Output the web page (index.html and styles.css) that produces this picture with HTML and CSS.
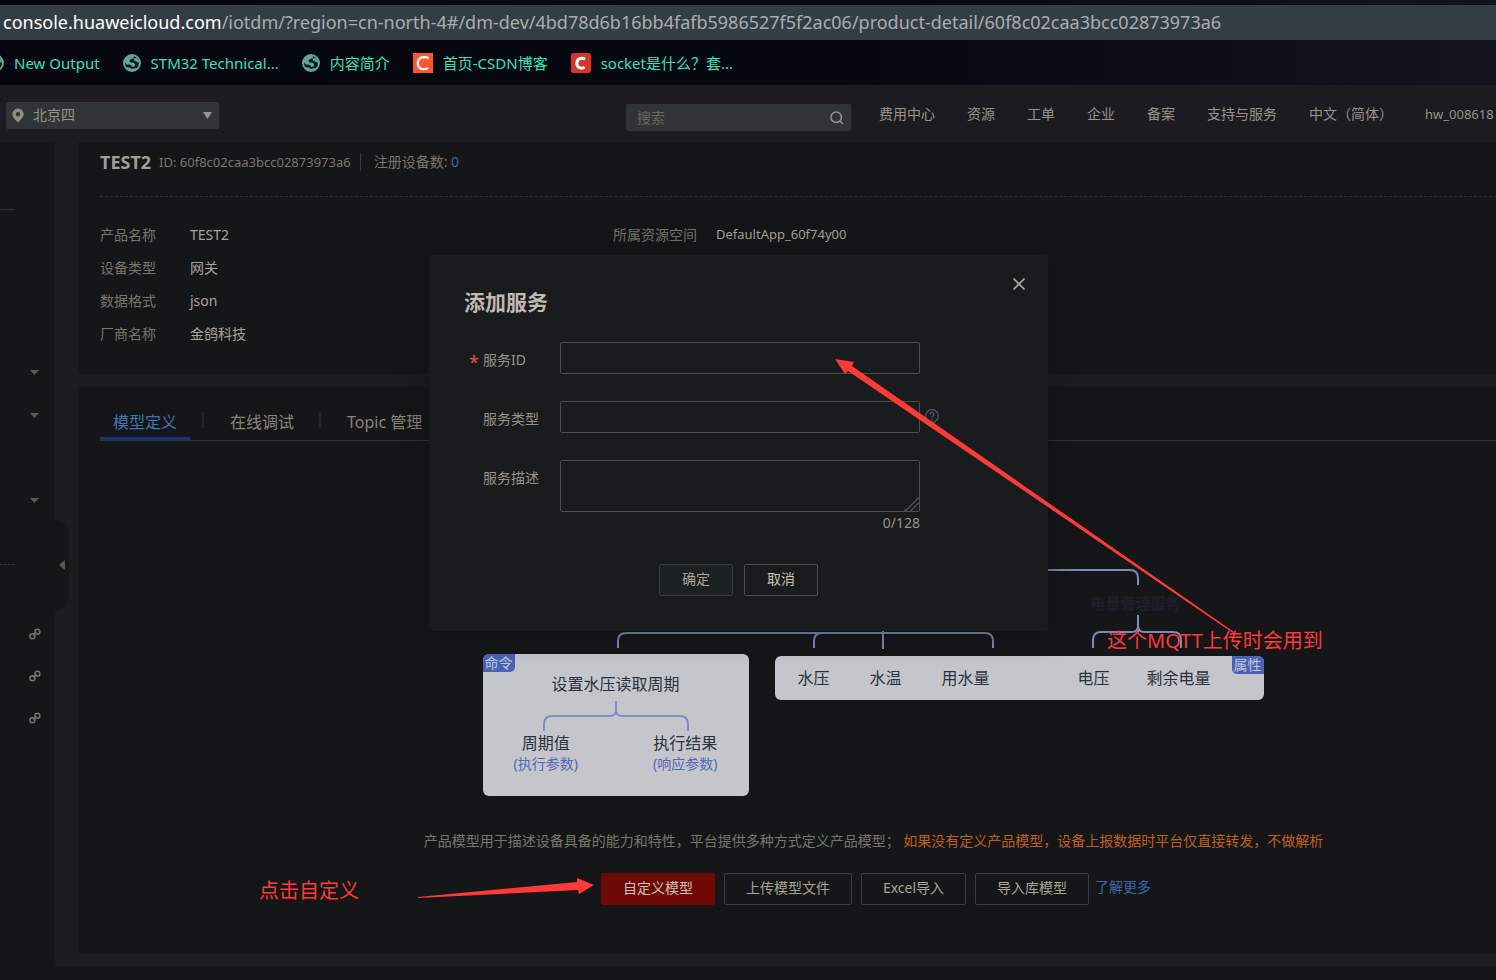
FILE: index.html
```html
<!DOCTYPE html>
<html lang="zh-CN">
<head>
<meta charset="utf-8">
<title>TEST2 - 产品详情</title>
<link rel="stylesheet" href="styles.css">
</head>
<body>
<svg class="sprite" aria-hidden="true">
  <symbol id="globe" viewBox="0 0 18 18">
    <circle cx="9" cy="9" r="8" fill="#0a1416" stroke="#5fa796" stroke-width="2"/>
    <path d="M1.500 8C2 4 5 1.200 9.500 1.200L11 2.500 10.500 4.500 8 5 6.500 6.800 7.500 8.500 10.500 8.500 12.300 10.500 11.500 12.500 9 13 8.500 11.500 6.500 10.500 4 10.800Z" fill="#5fa796"/>
    <path d="M10.500 4.500L13.500 4 16.800 8 15.500 8.800 13 7.500 11 6.500ZM3 13L6.500 13.500 9 15 12.500 14 14.500 14.200C12 17.500 5.500 18 3 13Z" fill="#5fa796"/>
  </symbol>
  <symbol id="chain" viewBox="0 0 12 12">
    <g fill="none" stroke="#77726a" stroke-width="1.500">
      <circle cx="3.400" cy="8.300" r="2.500"/>
      <circle cx="8.400" cy="3.700" r="2.500"/>
      <path d="M4.200 7.500L7.600 4.500"/>
    </g>
  </symbol>
</svg>

<div class="page">
  <div class="browser">
    <div class="address"><b>console.huaweicloud.com</b>/iotdm/?region=cn-north-4#/dm-dev/4bd78d6b16bb4fafb5986527f5f2ac06/product-detail/60f8c02caa3bcc02873973a6</div>
    <nav class="bookmarks" aria-label="书签">
      <a href="#"><svg class="globe"><use href="#globe"/></svg>New Output</a>
      <a href="#"><svg class="globe"><use href="#globe"/></svg>STM32 Technical...</a>
      <a href="#"><svg class="globe"><use href="#globe"/></svg>内容简介</a>
      <a href="#"><svg class="csdn" viewBox="0 0 20 20"><path fill="#fc5531" d="M0 0H20V20H0Z"/><path d="M15.500 5.200C12.500 3.300 4.800 3.300 4.800 10.300S12 17 15.200 14.800" fill="none" stroke="#fff" stroke-width="2.200"/></svg>首页-CSDN博客</a>
      <a href="#"><svg class="csdn" viewBox="0 0 20 20"><rect width="20" height="20" rx="2.500" fill="#d7342a"/><path d="M14 6.200C10.500 4.300 5.800 5.300 5.800 10.200S10.500 16 13.700 14.300" fill="none" stroke="#fff" stroke-width="3"/></svg>socket是什么？套...</a>
    </nav>
  </div>

  <header class="console">
    <div class="region">
      <svg class="pin" viewBox="0 0 12 15"><path fill="#928c83" fill-rule="evenodd" d="M6 .5A5.700 5.700 0 0 0 .3 6.200C.3 9.500 4 12 6 14.600 8 12 11.700 9.500 11.700 6.200A5.700 5.700 0 0 0 6 .5ZM6 4A2.200 2.200 0 1 1 6 8.400 2.200 2.200 0 0 1 6 4Z"/></svg>
      <select aria-label="区域"><option>北京四</option></select>
      <svg class="down" viewBox="0 0 9 7"><path fill="#98928a" d="M0 0H9L4.500 7Z"/></svg>
    </div>
    <div class="search">
      <input type="search" placeholder="搜索" aria-label="搜索">
      <svg viewBox="0 0 14 14"><circle cx="6.200" cy="6.200" r="5.200" fill="none" stroke="#98928a" stroke-width="1.500"/><path d="M10 10L13 13" stroke="#98928a" stroke-width="1.500"/></svg>
    </div>
    <nav class="menu" aria-label="导航">
      <a href="#">费用中心</a><a href="#">资源</a><a href="#">工单</a><a href="#">企业</a><a href="#">备案</a><a href="#">支持与服务</a><a href="#">中文（简体）</a><a class="latin" href="#">hw_008618</a>
    </nav>
  </header>

  <div class="body">
    <aside class="side">
      <hr class="rule">
      <button class="row" aria-label="展开"><svg class="caret" viewBox="0 0 9 5"><path d="M0 0H9L4.500 5Z"/></svg></button>
      <button class="row" aria-label="展开"><svg class="caret" viewBox="0 0 9 5"><path d="M0 0H9L4.500 5Z"/></svg></button>
      <div class="row short"></div>
      <button class="row" aria-label="展开"><svg class="caret" viewBox="0 0 9 5"><path d="M0 0H9L4.500 5Z"/></svg></button>
      <hr class="rule dashed">
      <a class="row short" href="#" aria-label="链接"><svg class="chain"><use href="#chain"/></svg></a>
      <a class="row short" href="#" aria-label="链接"><svg class="chain"><use href="#chain"/></svg></a>
      <a class="row short" href="#" aria-label="链接"><svg class="chain"><use href="#chain"/></svg></a>
      <button class="handle" aria-label="收起"><svg viewBox="0 0 6 10"><path fill="#5f584e" d="M6 0V10L0 5Z"/></svg></button>
    </aside>

    <main class="content">
      <section class="card summary">
        <div class="heading">
          <h1>TEST2</h1>
          <span class="pid latin">ID: 60f8c02caa3bcc02873973a6</span>
          <span class="count">注册设备数: <a href="#">0</a></span>
        </div>
        <dl class="facts">
          <dt>产品名称</dt><dd>TEST2</dd><dt>所属资源空间</dt><dd class="latin">DefaultApp_60f74y00</dd>
          <dt>设备类型</dt><dd>网关</dd>
          <dt>数据格式</dt><dd>json</dd>
          <dt>厂商名称</dt><dd>金鸽科技</dd>
        </dl>
      </section>

      <section class="card model">
        <nav class="tabs" aria-label="标签页">
          <a class="active" href="#">模型定义</a><a href="#">在线调试</a><a href="#">Topic 管理</a>
        </nav>

        <div class="diagram">
          <svg class="lines" viewBox="0 0 782 236" fill="none" stroke="#7d8bb8" stroke-width="2">
            <path d="M400 10H647Q655 10 655 18V25M655 55V72M610 88V80Q610 72 618 72H649Q655 72 655 66Q655 72 661 72H690Q698 72 698 80V88"/>
            <path d="M135 88V81Q135 73 143 73H502Q510 73 510 81V88M331 88V81Q331 73 339 73M400 71V89"/>
          </svg>
          <strong class="service">电量管理服务</strong>
          <div class="node command">
            <span class="tag">命令</span>
            <p>设置水压读取周期</p>
            <svg viewBox="0 0 148 32" fill="none" stroke="#7d8fc4" stroke-width="2"><path d="M2 31V24Q2 16 10 16H68Q74 16 74 10V1V10Q74 16 80 16H138Q146 16 146 24V31"/></svg>
            <div class="pair">
              <div>周期值<small>(执行参数)</small></div>
              <div>执行结果<small>(响应参数)</small></div>
            </div>
          </div>
          <div class="node props">
            <span>水压</span><span>水温</span><span>用水量</span><span class="apart">电压</span><span>剩余电量</span>
            <span class="tag">属性</span>
          </div>
        </div>

        <p class="hint">产品模型用于描述设备具备的能力和特性，平台提供多种方式定义产品模型； <em>如果没有定义产品模型，设备上报数据时平台仅直接转发，不做解析</em></p>
        <div class="actions">
          <button class="btn primary">自定义模型</button>
          <button class="btn">上传模型文件</button>
          <button class="btn">Excel导入</button>
          <button class="btn">导入库模型</button>
          <a href="#">了解更多</a>
        </div>
      </section>
    </main>
  </div>

  <div class="overlay">
    <form class="modal" role="dialog" aria-labelledby="dlg-title">
      <button class="close" type="button" aria-label="关闭"><svg viewBox="0 0 12 12"><path d="M.5.5L11.500 11.500M11.500.5L.5 11.500" stroke="#aaa69d" stroke-width="1.600"/></svg></button>
      <h2 id="dlg-title">添加服务</h2>
      <div class="field">
        <label for="sid"><i>*</i>服务ID</label>
        <input id="sid" type="text">
      </div>
      <div class="field">
        <label for="stype">服务类型</label>
        <input id="stype" type="text">
        <svg class="help" viewBox="0 0 14 14" fill="none" stroke="#515868" stroke-width="1.200"><circle cx="7" cy="7" r="6.300"/><path d="M5 5.500C5 2.700 9.200 2.900 9 5.400 8.900 6.700 7 6.800 7 8.600M7 9.800V11.200"/></svg>
      </div>
      <div class="field">
        <label for="sdesc">服务描述</label>
        <textarea id="sdesc"></textarea>
      </div>
      <div class="counter">0/128</div>
      <div class="buttons">
        <button class="btn ok" type="button">确定</button>
        <button class="btn cancel" type="button">取消</button>
      </div>
    </form>
  </div>

  <svg class="arrows" fill="#fc3a38" aria-hidden="true">
    <path d="M835 359L854 362 852 366 1234 632 1233 633 848 371 845 374Z"/>
    <path d="M418 897L577 882 577 878 594 885 579 894 578 890 418 898Z"/>
  </svg>
  <span class="note note-mqtt">这个MQTT上传时会用到</span>
  <span class="note note-custom">点击自定义</span>
</div>
</body>
</html>
```
FILE: styles.css
```css
* { box-sizing: border-box; }

body {
  margin: 0;
  background: #141617;
  color: #98928a;
  font: 14px/20px "Noto Sans", "Noto Sans CJK SC", sans-serif;
}

a { color: inherit; text-decoration: none; }
button, input, select, textarea { font: inherit; color: inherit; margin: 0; }
h1, h2, p, dl, dd, hr { margin: 0; }
svg { flex: none; display: block; }
.sprite { position: absolute; width: 0; height: 0; }
.latin { font-size: 13px; }

.page {
  position: relative;
  min-height: 100vh;
  overflow: hidden;
}

/* browser chrome */
.browser {
  padding-top: 5px;
  background: linear-gradient(90deg, #05060e, #070911 60%, #12151f);
}
.address {
  padding-left: 3px;
  background: #353d44;
  color: #a9adb0;
  font-size: 18px;
  line-height: 35px;
  white-space: nowrap;
}
.address b { color: #fff; font-weight: 400; }
.bookmarks {
  display: flex;
  align-items: center;
  gap: 23px;
  height: 45px;
  margin-left: -14px;
  color: #41e0b4;
  font-size: 15px;
  white-space: nowrap;
}
.bookmarks a { display: flex; align-items: center; gap: 10px; }
.globe { width: 18px; height: 18px; }
.csdn { width: 20px; height: 20px; }

/* console header */
.console {
  display: flex;
  align-items: center;
  height: 57px;
  padding-left: 6px;
  background: #1c1c20;
  white-space: nowrap;
}
.region, .search {
  display: flex;
  align-items: center;
  height: 27px;
  border-radius: 2px;
  background: #303436;
}
.region { flex: none; width: 213px; margin-top: 4px; padding: 0 7px 0 6px; }
.region select {
  flex: 1;
  border: 0;
  padding: 0 0 2px 9px;
  background: none;
  appearance: none;
}
.pin { width: 12px; height: 15px; }
.down { width: 9px; height: 7px; }
.search { flex: none; width: 225px; margin: 8px 28px 0 407px; padding: 0 7px 0 11px; }
.search input {
  flex: 1;
  min-width: 0;
  border: 0;
  padding: 0;
  background: none;
  appearance: none;
  outline: 0;
}
.search input::placeholder { color: #69665f; opacity: 1; }
.search svg { width: 14px; height: 14px; }
.menu { display: flex; gap: 32px; }

/* page body */
.body { display: flex; background: #1b1c1e; }
.side {
  position: relative;
  flex: none;
  width: 55px;
  background: #141617;
}
.rule {
  width: 15px;
  margin: 67px 0 141px;
  border: 0;
  border-top: 1px solid #303234;
}
.rule.dashed { margin: 42px 0 48px; border-top-style: dashed; }
.row {
  display: flex;
  align-items: center;
  width: 100%;
  height: 43px;
  padding: 0 0 0 30px;
  border: 0;
  background: none;
}
.row.short { height: 42px; padding-left: 29px; }
.caret { width: 9px; height: 5px; fill: #5f584e; }
.chain { width: 12px; height: 12px; }
.handle {
  position: absolute;
  top: 378px;
  left: 55px;
  width: 14px;
  height: 90px;
  padding: 0 0 0 4px;
  border: 0;
  border-radius: 0 14px 14px 0;
  background: #141617;
}
.handle svg { width: 6px; height: 10px; }

/* the content column is wider than the window and runs past its right edge */
.content {
  flex: 1;
  display: grid;
  gap: 13px;
  margin-right: -173px;
  padding: 0 0 14px 23px;
}
.card { background: #141617; padding: 0 22px; }

.summary { padding-bottom: 24px; }
.heading {
  display: flex;
  align-items: center;
  height: 55px;
  padding-bottom: 15px;
  border-bottom: 1px dashed #2e3133;
  color: #7a756e;
}
.heading h1 { color: #a39e95; font-size: 18px; }
.pid { margin: 0 9px 0 8px; }
.count { padding-left: 13px; border-left: 1px solid #3a3b3c; line-height: 18px; }
.count a { color: #3c68a8; }
.facts {
  display: grid;
  grid-template-columns: 90px 423px 103px 1fr;
  grid-auto-rows: 33px;
  padding: 21px 0 0;
  line-height: 33px;
}
.facts dt { color: #7a756e; }
.facts dt:nth-of-type(n+3) { grid-column: 1; }
.facts dt:nth-of-type(2) { grid-column: 3; }
.facts dd { color: #a9a49b; }

.model { padding-bottom: 48px; }
.tabs {
  display: flex;
  gap: 27px;
  padding-top: 20px;
  border-bottom: 1px solid #323436;
  color: #8a847b;
  font-size: 16px;
  line-height: 30px;
}
.tabs a {
  position: relative;
  padding: 0 13px;
  border-bottom: 3px solid transparent;
}
.tabs a + a::before {
  content: "";
  position: absolute;
  left: -15px;
  top: 5px;
  height: 16px;
  border-left: 2px solid #242627;
}
.tabs .active { color: #4274b8; border-color: #1c2f7a; }

.diagram {
  position: relative;
  width: 782px;
  height: 236px;
  margin: 119px auto 0;
  color: #2a3040;
  font-size: 16px;
  white-space: nowrap;
}
.lines { width: 100%; height: 100%; }
.service { position: absolute; left: 608px; top: 33px; color: #1b202c; font-size: 15px; }
.node { position: absolute; border-radius: 6px; background: #c5c6cb; overflow: hidden; }
.command {
  left: 0;
  top: 94px;
  width: 266px;
  height: 142px;
  padding: 20px 0;
  text-align: center;
}
.command svg { width: 148px; height: 32px; margin: 6px auto 1px 59px; }
.pair { display: flex; justify-content: space-between; padding: 0 31px; }
.pair small { display: block; color: #5468b4; font-size: 14px; line-height: 22px; }
.props {
  left: 292px;
  top: 96px;
  display: flex;
  align-items: center;
  gap: 40px;
  width: 489px;
  height: 44px;
  padding-left: 23px;
}
.apart { margin: 0 -3px 0 48px; }
.tag {
  position: absolute;
  top: 0;
  padding: 0 2px;
  background: #4a62b4;
  color: #c3c8da;
  font-size: 14px;
  line-height: 18px;
}
.command .tag { left: 0; border-radius: 0 0 5px 0; }
.props .tag { right: 0; border-radius: 0 0 0 5px; }

.hint {
  margin-top: 35px;
  color: #7a756e;
  text-align: center;
}
.hint em { color: #c0601f; font-style: normal; }
.actions {
  display: flex;
  justify-content: center;
  gap: 9px;
  margin-top: 22px;
  padding-left: 5px;
}
.btn {
  height: 32px;
  padding: 0 21px 2px;
  border: 1px solid #3b3d3f;
  border-radius: 2px;
  background: none;
  color: #a9a49b;
}
.btn.primary { border-color: #6e0906; background: #6e0906; color: #c9c3bb; }
.actions a { margin: 4px 0 0 -3px; color: #3c68a8; }

/* dialog */
.overlay {
  position: absolute;
  inset: 0;
  display: flex;
  justify-content: center;
  align-items: flex-start;
  padding: 255px 19px 0 0;
}
.modal {
  position: relative;
  width: 619px;
  padding: 35px 35px 35px 40px;
  border-radius: 2px;
  background: #1a1b1d;
  box-shadow: 0 0 30px #0e101180;
}
.modal h2 { margin: 0 0 27px -5px; color: #bfbab0; font-size: 21px; line-height: 25px; }
.close { position: absolute; top: 23px; right: 23px; padding: 0; border: 0; background: none; }
.close svg { width: 12px; height: 12px; }
.field {
  display: grid;
  grid-template-columns: 91px 360px 24px;
  align-items: start;
  margin-bottom: 27px;
}
.field label { padding: 8px 0 0 14px; color: #98938a; }
.field i { float: left; margin-left: -14px; color: #e0504c; font-size: 18px; font-style: normal; line-height: 24px; }
.field input, .field textarea {
  width: 100%;
  height: 32px;
  padding: 0 8px;
  border: 1px solid #4b4d4e;
  border-radius: 2px;
  background: none;
  outline: 0;
}
.field textarea { display: block; height: 52px; }
.field textarea::-webkit-resizer {
  background: linear-gradient(135deg, transparent 50%, #4b4d4e 50% 57%, transparent 57% 68%, #4b4d4e 68% 75%, transparent 75%);
}
.field:nth-of-type(3) { margin-bottom: 1px; }
.help { width: 14px; height: 14px; margin: 8px 0 0 5px; }
.counter { width: 451px; text-align: right; }
.buttons { display: flex; gap: 11px; margin: 31px 0 0 190px; }
.buttons .btn { width: 74px; padding: 0 0 2px; border-color: #4b4d4e; }
.buttons .ok { border-color: #363e3f; background: #1b2021; }
.buttons .cancel { color: #c9c3b9; }

/* hand-drawn marks on top of everything */
.arrows { position: absolute; inset: 0; width: 100%; height: 100%; pointer-events: none; }
.note { position: absolute; color: #fc3a38; font-size: 20px; line-height: 28px; white-space: nowrap; }
.note-mqtt { left: 1107px; top: 627px; }
.note-custom { left: 259px; top: 877px; }
```
